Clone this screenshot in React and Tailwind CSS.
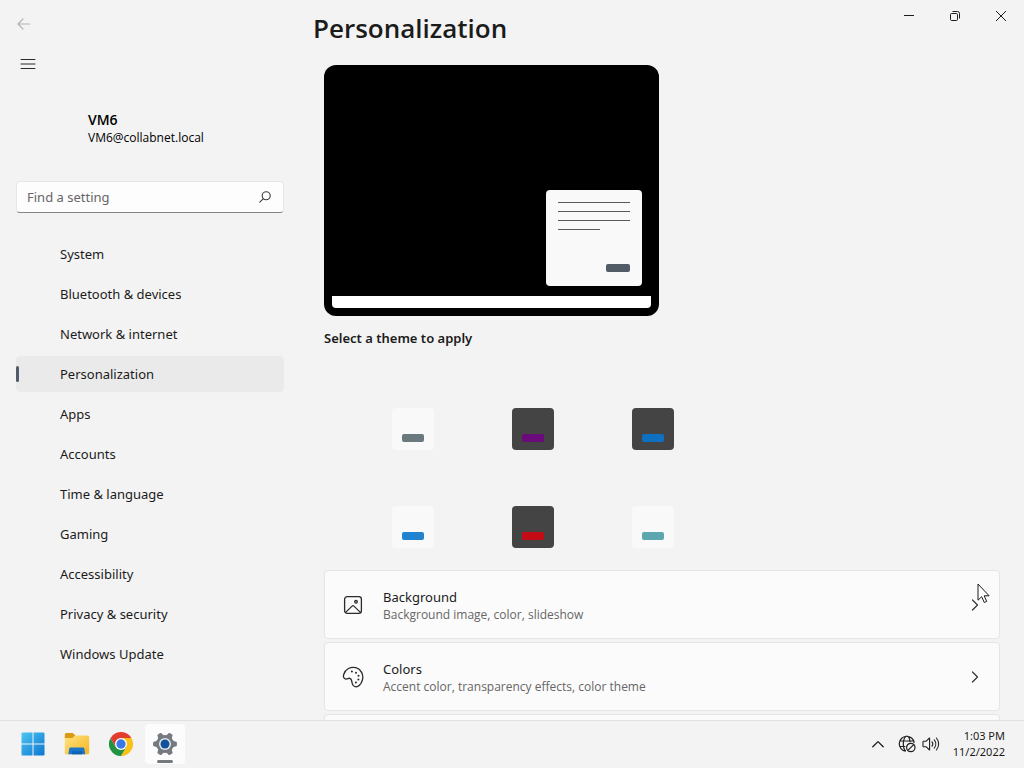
import React from "react";

const navItems = [
  "System",
  "Bluetooth & devices",
  "Network & internet",
  "Personalization",
  "Apps",
  "Accounts",
  "Time & language",
  "Gaming",
  "Accessibility",
  "Privacy & security",
  "Windows Update",
];

const themes = [
  { name: "Slate light", tile: "bg-[#f9f9f9]", accent: "bg-[#69797e]" },
  { name: "Purple dark", tile: "bg-[#444444]", accent: "bg-[#6b0a7b]" },
  { name: "Blue dark", tile: "bg-[#444444]", accent: "bg-[#0f6fc0]" },
  { name: "Blue light", tile: "bg-[#f9f9f9]", accent: "bg-[#2183d0]" },
  { name: "Red dark", tile: "bg-[#444444]", accent: "bg-[#c30b16]" },
  { name: "Teal light", tile: "bg-[#f9f9f9]", accent: "bg-[#5ea6ae]" },
];

function BackIcon() {
  return (
    <svg width="14" height="12" viewBox="0 0 14 12" fill="none" stroke="#b4b4b4" strokeWidth="1.2" strokeLinecap="round" strokeLinejoin="round" aria-hidden="true">
      <path d="M6 1 1 6l5 5M1 6h11.5" />
    </svg>
  );
}

function MenuIcon() {
  return (
    <svg width="16" height="12" viewBox="0 0 16 12" fill="none" stroke="#2b2b2b" strokeWidth="1" strokeLinecap="round" aria-hidden="true">
      <path d="M1 1.5h14M1 6h14M1 10.5h14" />
    </svg>
  );
}

function SearchIcon() {
  return (
    <svg width="12" height="12" viewBox="0 0 12 12" fill="none" stroke="#3a3a3a" strokeWidth="1.1" strokeLinecap="round" aria-hidden="true">
      <circle cx="7.2" cy="4.8" r="4" />
      <path d="M4.2 7.8 .8 11.2" />
    </svg>
  );
}

function ImageIcon() {
  return (
    <svg width="20" height="20" viewBox="0 0 20 20" fill="none" stroke="#2b2b2b" strokeWidth="1.3" strokeLinecap="round" strokeLinejoin="round" aria-hidden="true">
      <rect x="1.6" y="1.6" width="16.8" height="16.8" rx="2.6" />
      <circle cx="13" cy="6.8" r="1.3" />
      <path d="m2.6 17.4 6.5-6.3a1.3 1.3 0 0 1 1.8 0l6.5 6.3" />
    </svg>
  );
}

function PaletteIcon() {
  return (
    <svg width="22" height="22" viewBox="0 0 22 22" fill="none" stroke="#2b2b2b" strokeWidth="1.3" strokeLinejoin="round" aria-hidden="true">
      <path d="M1.700 8.500C3.200 3.200 8.800.2 13.800 1.700c5.200 1.500 8.100 6.900 6.600 12.300-1.200 4.500-4.300 7.500-7.200 6.700-2.200-.6-3-2.500-3.300-4.700-.3-2.100-.7-3.300-2.100-3.700-1.400-.3-2.400 1-3.900.8C1.700 12.800 1 10.900 1.700 8.500Z" />
      <g fill="#2b2b2b" stroke="none">
        <circle cx="9.900" cy="5.600" r="1" />
        <circle cx="14" cy="6.700" r="1" />
        <circle cx="16.500" cy="9.700" r="1" />
        <circle cx="16.400" cy="13.600" r="1" />
        <circle cx="13.900" cy="16.500" r="1" />
      </g>
    </svg>
  );
}

function ChevronRightIcon() {
  return (
    <svg width="8" height="12" viewBox="0 0 8 12" fill="none" stroke="#333333" strokeWidth="1.2" strokeLinecap="round" strokeLinejoin="round" aria-hidden="true">
      <path d="m1.500 1 5 5-5 5" />
    </svg>
  );
}

function StartIcon() {
  return (
    <svg width="24" height="24" viewBox="0 0 24 24" aria-hidden="true">
      <defs>
        <linearGradient id="start" x1="0" y1="0" x2="24" y2="24" gradientUnits="userSpaceOnUse">
          <stop stopColor="#4fc8f3" />
          <stop offset="1" stopColor="#0a74cf" />
        </linearGradient>
      </defs>
      <path fill="url(#start)" d="M1.500 .5H11.500v11H.5v-10a1 1 0 0 1 1-1ZM12.500 .5h10a1 1 0 0 1 1 1v10h-11ZM.5 12.500h11v11h-10a1 1 0 0 1-1-1ZM12.500 12.500h11v10a1 1 0 0 1-1 1h-10Z" />
    </svg>
  );
}

function FolderIcon() {
  return (
    <svg width="26" height="24" viewBox="0 0 26 24" aria-hidden="true">
      <defs>
        <linearGradient id="folder" x1="4" y1="3" x2="20" y2="23" gradientUnits="userSpaceOnUse">
          <stop stopColor="#ffe07b" />
          <stop offset="1" stopColor="#f5b92b" />
        </linearGradient>
      </defs>
      <path fill="#d99a16" d="M.8 2.500A1.500 1.500 0 0 1 2.300 1h6.500l2.700 2.600-2.300 3H.8Z" />
      <path fill="url(#folder)" d="M.8 6h7.400l3-2.600h12.500a1.500 1.500 0 0 1 1.500 1.500v15.900a1.500 1.500 0 0 1-1.500 1.500H2.300a1.500 1.500 0 0 1-1.500-1.500Z" />
      <path fill="#1976c9" d="M6.600 15.500h12.400a1.500 1.500 0 0 1 1.400 1.200l.8 5.600H4.400l.8-5.600a1.500 1.500 0 0 1 1.400-1.200Z" />
      <path fill="#0d62b3" d="M8 19.300h10v3H8Z" />
    </svg>
  );
}

function ChromeIcon() {
  return (
    <svg width="24" height="24" viewBox="0 0 48 48" aria-hidden="true">
      <path fill="#fbc116" d="M24 12h20.800A24 24 0 0 1 24 48l10.400-18Z" />
      <path fill="#229342" d="M3.200 12A24 24 0 0 0 24 48l10.400-18L24 24l-10.400 6Z" />
      <path fill="#e33b2e" d="M3.200 12A24 24 0 0 1 44.800 12H24L13.600 30Z" />
      <circle cx="24" cy="24" r="12" fill="#ffffff" />
      <circle cx="24" cy="24" r="9.300" fill="#3b78e7" />
    </svg>
  );
}

function GearIcon() {
  return (
    <svg width="24" height="24" viewBox="0 0 24 24" aria-hidden="true">
      <g fill="#767a7e">
        <circle cx="12" cy="12" r="9" />
        {[30, 90, 150, 210, 270, 330].map((angle) => (
          <path key={angle} transform={`rotate(${angle} 12 12)`} d="M8.600 5 9.700.9a1 1 0 0 1 .9-.8h2.800a1 1 0 0 1 .9.8L15.400 5Z" />
        ))}
      </g>
      <circle cx="12" cy="12" r="6" fill="#e3ebf2" />
      <circle cx="12" cy="12" r="4.500" fill="#13529b" />
    </svg>
  );
}

function NetworkIcon() {
  return (
    <svg width="18" height="18" viewBox="0 0 18 18" fill="none" stroke="#1f1f1f" strokeWidth="1.200" aria-hidden="true">
      <path d="M7.800 16.200a7.500 7.500 0 1 1 8.400-8.400M1.900 6h13.600M1.900 11.500h5.400M7.800 16.200C6.200 14.800 5.300 12.200 5.300 8.700s1.400-7.500 3.400-7.500 3.100 2.900 3.400 5.900" />
      <circle cx="12.800" cy="12.500" r="4.200" />
      <path d="m9.900 15.400 5.800-5.800" />
    </svg>
  );
}

function SpeakerIcon() {
  return (
    <svg width="18" height="16" viewBox="0 0 18 16" fill="none" stroke="#1f1f1f" strokeWidth="1.100" strokeLinecap="round" strokeLinejoin="round" aria-hidden="true">
      <path d="M1 6a.8.8 0 0 1 .8-.8h2.400L7.600 2v12l-3.400-3.200H1.800A.8.8 0 0 1 1 10ZM10 5.800a3.500 3.500 0 0 1 0 4.400M12.200 3.800a6.500 6.500 0 0 1 0 8.400M14.400 2a9.200 9.200 0 0 1 0 12" />
    </svg>
  );
}

function Pointer() {
  return (
    <svg className="pointer-events-none absolute right-[10px] top-[13px]" width="13" height="21" viewBox="0 0 13 21" aria-hidden="true">
      <path d="M1 1v16.200l3.700-3.500 2.600 5.800 2.400-1.100-2.500-5.600h4.900Z" fill="#ffffff" stroke="#1a1a1a" strokeWidth="1" strokeLinejoin="round" />
    </svg>
  );
}

function Sidebar() {
  return (
    <aside className="flex w-[300px] shrink-0 flex-col px-4 pt-2">
      <button aria-label="Back" className="flex h-8 w-4 items-center justify-center">
        <BackIcon />
      </button>
      <button aria-label="Open navigation" className="mt-2 flex h-8 w-6 items-center justify-center">
        <MenuIcon />
      </button>
      <div className="mt-[31px] pl-[72px] font-['Open_Sans','Noto_Sans',sans-serif] text-black">
        <p className="text-[14px] font-semibold leading-[18px]">VM6</p>
        <p className="text-[12px] leading-[18px]">VM6@collabnet.local</p>
      </div>
      <div className="mt-[34px] flex h-8 w-full items-center rounded border border-[#e6e6e6] border-b-[#858585] bg-[#fdfdfd] px-[10px]">
        <input
          type="text"
          aria-label="Find a setting"
          placeholder="Find a setting"
          className="min-w-0 flex-1 bg-transparent pt-0.5 text-[13px] text-[#1b1b1b] outline-none placeholder:text-[#666666]"
        />
        <button aria-label="Search" className="flex w-4 justify-center">
          <SearchIcon />
        </button>
      </div>
      <nav className="mt-[23px] flex flex-col gap-1">
        {navItems.map((item) => {
          const active = item === "Personalization";
          return (
            <a
              key={item}
              href="#"
              aria-current={active ? "page" : undefined}
              className={`flex h-9 items-center rounded text-[13px] text-[#1b1b1b] ${active ? "bg-[#eaeaea]" : ""}`}
            >
              <span className={`h-4 w-[3px] rounded-full ${active ? "bg-[#515c6b]" : ""}`} />
              <span className="pl-[41px] pt-0.5">{item}</span>
            </a>
          );
        })}
      </nav>
    </aside>
  );
}

function WindowControls() {
  return (
    <div className="flex">
      <button aria-label="Minimize" className="flex h-8 w-[46px] items-center justify-center">
        <svg width="10" height="10" viewBox="0 0 10 10" stroke="#1b1b1b" aria-hidden="true">
          <path d="M0 4.500h10" />
        </svg>
      </button>
      <button aria-label="Restore" className="flex h-8 w-[46px] items-center justify-center">
        <svg width="10" height="10" viewBox="0 0 10 10" fill="none" stroke="#1b1b1b" aria-hidden="true">
          <rect x=".5" y="2.500" width="7" height="7" rx="1.200" />
          <path d="M2.500 .5h5a2 2 0 0 1 2 2v5" />
        </svg>
      </button>
      <button aria-label="Close" className="flex h-8 w-[46px] items-center justify-center">
        <svg width="10" height="10" viewBox="0 0 10 10" stroke="#1b1b1b" aria-hidden="true">
          <path d="m0 0 10 10M10 0 0 10" />
        </svg>
      </button>
    </div>
  );
}

function DesktopPreview() {
  return (
    <div className="flex h-[251px] w-[335px] flex-col justify-end rounded-xl bg-black p-2">
      <div className="mb-[10px] mr-[9px] flex h-24 w-24 flex-col self-end rounded bg-[#f9f9f9] px-3 pb-[14px] pt-3">
        <div className="flex flex-col gap-2">
          <span className="h-px w-full bg-[#5a5a5a]" />
          <span className="h-px w-full bg-[#5a5a5a]" />
          <span className="h-px w-full bg-[#5a5a5a]" />
          <span className="h-px w-[42px] bg-[#5a5a5a]" />
        </div>
        <span className="mt-auto h-2 w-6 self-end rounded-[2px] bg-[#515c66]" />
      </div>
      <div className="h-3 rounded-b bg-white" />
    </div>
  );
}

function ThemeTile({ theme }) {
  return (
    <button aria-label={theme.name} className={`flex h-[42px] w-[42px] items-end justify-center rounded pb-2 ${theme.tile}`}>
      <span className={`h-2 w-[22px] rounded-[2px] ${theme.accent}`} />
    </button>
  );
}

function SettingCard({ icon, title, detail, children }) {
  return (
    <div className="relative">
      <button className="flex h-[69px] w-full items-center rounded border border-[#e5e5e5] bg-[#fbfbfb] pl-[17px] pr-5 text-left">
        <span className="flex w-[22px] justify-center">{icon}</span>
        <span className="ml-[19px] flex flex-1 flex-col pt-[3px]">
          <span className="text-[13px] leading-[18px] text-[#1b1b1b]">{title}</span>
          <span className="font-['Open_Sans','Noto_Sans',sans-serif] text-[12px] leading-[18px] text-[#666666]">{detail}</span>
        </span>
        <ChevronRightIcon />
      </button>
      {children}
    </div>
  );
}

function Taskbar() {
  return (
    <footer className="flex h-12 shrink-0 items-center justify-between border-t border-[#e0e0e0] bg-[#f3f3f3] pb-px pl-[13px] pr-[19px]">
      <div className="flex gap-1">
        <button aria-label="Start" className="flex h-10 w-10 items-center justify-center">
          <StartIcon />
        </button>
        <button aria-label="File Explorer" className="flex h-10 w-10 items-center justify-center">
          <FolderIcon />
        </button>
        <button aria-label="Google Chrome" className="flex h-10 w-10 items-center justify-center">
          <ChromeIcon />
        </button>
        <button aria-label="Settings" className="relative flex h-10 w-10 items-center justify-center rounded bg-[#fcfcfc]">
          <GearIcon />
          <span className="absolute bottom-px h-[3px] w-4 rounded-full bg-[#74797f]" />
        </button>
      </div>
      <div className="flex items-center">
        <button aria-label="Show hidden icons" className="mr-[14px]">
          <svg width="12" height="8" viewBox="0 0 12 8" fill="none" stroke="#1b1b1b" strokeWidth="1.300" strokeLinecap="round" strokeLinejoin="round" aria-hidden="true">
            <path d="m.8 6.800 5.200-5.200 5.200 5.200" />
          </svg>
        </button>
        <button aria-label="Network and volume" className="mr-[13px] flex items-center gap-[6px]">
          <NetworkIcon />
          <SpeakerIcon />
        </button>
        <button className="text-right text-[11px] leading-4 text-[#1b1b1b]">
          <time dateTime="2022-11-02T13:03">
            1:03 PM
            <br />
            11/2/2022
          </time>
        </button>
      </div>
    </footer>
  );
}

export default function App() {
  return (
    <div className="flex h-screen flex-col overflow-hidden bg-[#f3f3f3] font-['Noto_Sans','Open_Sans',sans-serif]">
      <div className="flex min-h-0 flex-1 overflow-hidden">
        <Sidebar />
        <main className="flex min-w-0 flex-1 flex-col">
          <header className="flex items-start justify-between pl-[13px]">
            <h1 className="pt-[10px] font-['Open_Sans','Noto_Sans',sans-serif] text-[26px] font-semibold leading-9 text-[#1b1b1b]">Personalization</h1>
            <WindowControls />
          </header>
          <div className="mt-[19px] pl-6 pr-6">
            <DesktopPreview />
            <h2 className="mt-3 text-[13px] font-semibold leading-5 text-[#1b1b1b]">Select a theme to apply</h2>
            <div className="ml-[68px] mt-[60px] grid w-[282px] grid-cols-3 gap-x-[78px] gap-y-14">
              {themes.map((theme) => (
                <ThemeTile key={theme.name} theme={theme} />
              ))}
            </div>
            <div className="mt-[22px] flex flex-col gap-[3px]">
              <SettingCard icon={<ImageIcon />} title="Background" detail="Background image, color, slideshow">
                <Pointer />
              </SettingCard>
              <SettingCard icon={<PaletteIcon />} title="Colors" detail="Accent color, transparency effects, color theme" />
              <div className="h-[69px] rounded border border-[#e5e5e5] bg-[#fbfbfb]" />
            </div>
          </div>
        </main>
      </div>
      <Taskbar />
    </div>
  );
}
